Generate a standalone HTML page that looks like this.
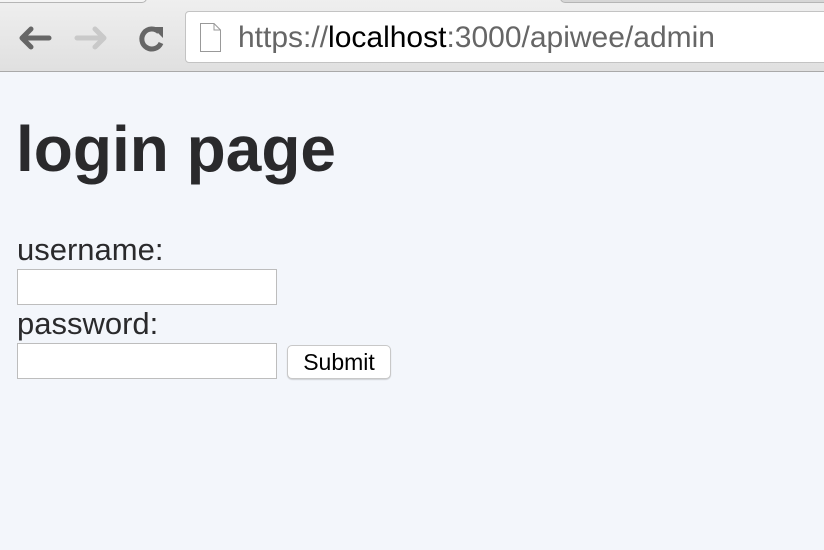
<!DOCTYPE html>
<html><head><meta charset="utf-8"><style>
*{margin:0;padding:0;box-sizing:border-box}
body{width:824px;height:550px;background:#f3f6fb;font-family:"Liberation Sans",Arial,sans-serif;position:relative;overflow:hidden}
.bar{position:absolute;left:0;top:0;width:824px;height:72px;background:linear-gradient(#efefef,#e0e0e0);border-bottom:1px solid #a9a9a9}
.tab1{position:absolute;left:-5px;top:-10px;width:152px;height:13px;border:1px solid #b5b5b5;border-radius:0 0 5px 5px;background:#f4f4f4}
.tab2{position:absolute;left:560px;top:-10px;width:300px;height:13px;border:1px solid #b5b5b5;border-radius:0 0 0 5px;background:#d6d6d6}
.url{position:absolute;left:185px;top:11px;width:660px;height:52px;background:#fff;border:1px solid #c3c3c3;border-radius:4px}
.urltext{position:absolute;left:238px;top:21px;font-size:30px;color:#666;white-space:nowrap}
.urltext b{font-weight:normal;color:#000}
h1{position:absolute;left:16px;top:113px;font-size:64px;font-weight:bold;color:#2a2a2c;line-height:72px;white-space:nowrap}
.lbl{position:absolute;left:17px;font-size:31px;color:#2a2a2c;line-height:34px}
.inp{position:absolute;left:17px;width:260px;height:36px;background:#fff;border:1px solid #bdbdbd}
.btn{position:absolute;left:287px;top:345px;width:104px;height:34px;background:#fff;border:1px solid #c8c8c8;border-radius:5px;box-shadow:0 1px 1px rgba(0,0,0,.15);font-size:23px;color:#000;text-align:center;line-height:32px}
</style></head><body>
<div class="bar"></div>
<div class="tab1"></div><div class="tab2"></div>
<svg style="position:absolute;left:16px;top:22px" width="160" height="34" viewBox="0 0 160 34">
<g fill="none" stroke-linecap="round" stroke-linejoin="round" stroke-width="5">
<path d="M6 16 H33 M6 16 L15 7 M6 16 L15 25" stroke="#666"/>
<path d="M61 16 H88 M88 16 L79 7 M88 16 L79 25" stroke="#c9c9c9"/>
</g>
<path d="M143 10 A10 10 0 1 0 145 21" fill="none" stroke="#666" stroke-width="5"/>
<path d="M136 5 L147 5 L147 16 Z" fill="#666"/>
</svg>
<div class="url"></div>
<svg style="position:absolute;left:199px;top:22px" width="24" height="31" viewBox="0 0 24 31">
<path d="M1.5 1.5 H15 L21.5 8 V29.5 H1.5 Z M15 1.5 V8 H21.5" fill="#fff" stroke="#999" stroke-width="1"/>
</svg>
<div class="urltext">https://<b>localhost</b>:3000/apiwee/admin</div>
<h1>login page</h1>
<div class="lbl" style="top:233px">username:</div>
<div class="inp" style="top:269px"></div>
<div class="lbl" style="top:307px">password:</div>
<div class="inp" style="top:343px"></div>
<div class="btn">Submit</div>
</body></html>
